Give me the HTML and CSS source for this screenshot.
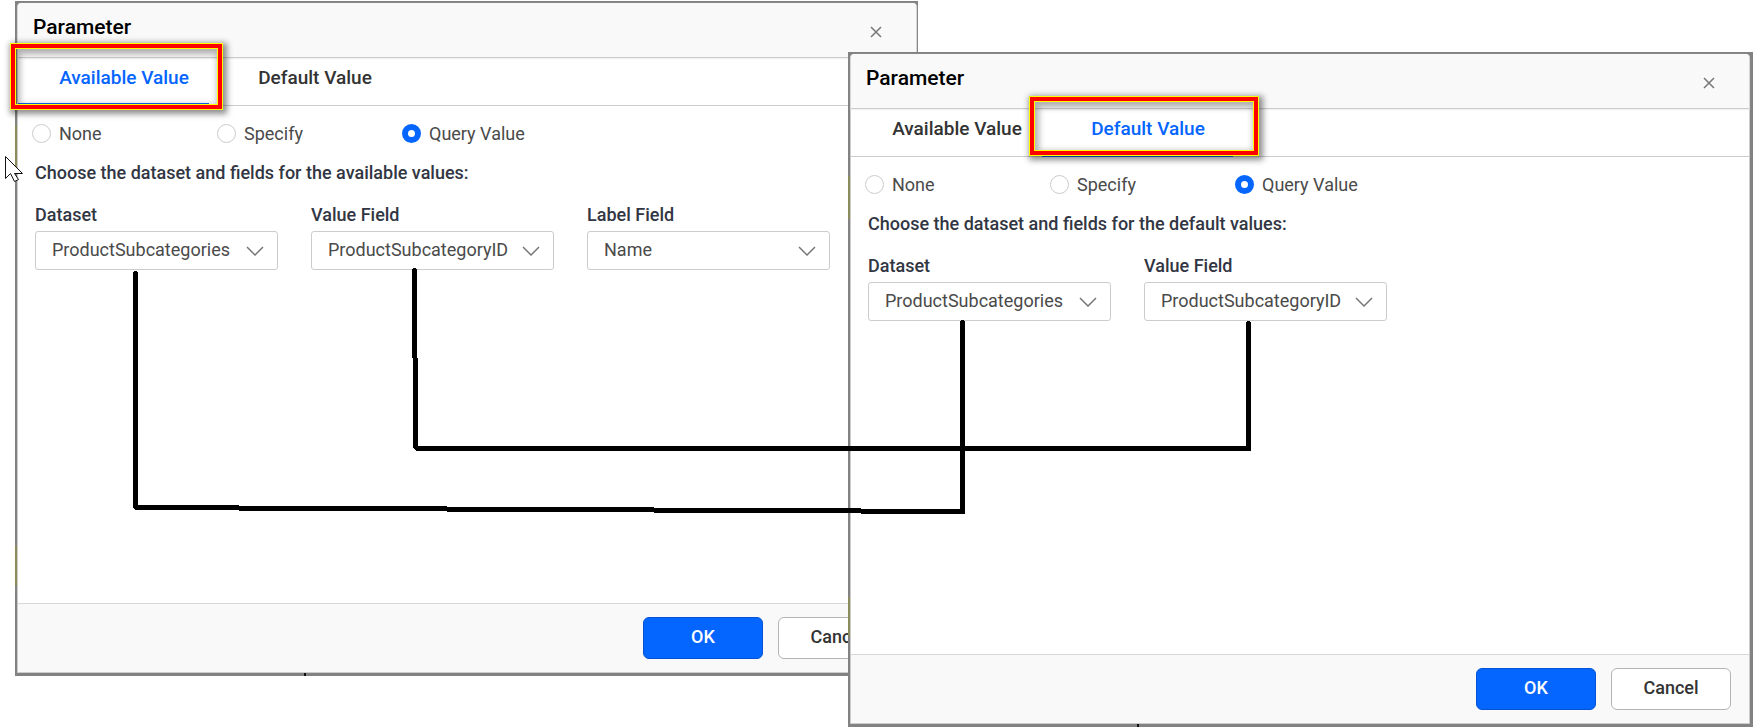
FILE: index.html
```html
<!DOCTYPE html>
<html lang="en">
<head>
<meta charset="utf-8">
<title>Parameter</title>
<link rel="stylesheet" href="styles.css">
</head>
<body>
<main class="stage">
  <section class="dialog dialog-available" role="dialog" aria-labelledby="title-a">
    <div class="panel">
      <header class="head">
        <h2 class="title" id="title-a">Parameter</h2>
        <button class="close" type="button" aria-label="Close"><svg width="12" height="12" viewBox="0 0 12 12"><path d="M1 1l10 10M11 1L1 11"/></svg></button>
      </header>
      <nav class="tabs" role="tablist">
        <button class="tab active" type="button" role="tab" aria-selected="true">Available Value</button>
        <button class="tab" type="button" role="tab" aria-selected="false">Default Value</button>
      </nav>
      <div class="body">
        <div class="modes">
          <label class="mode"><input type="radio" name="mode-a"><span>None</span></label>
          <label class="mode"><input type="radio" name="mode-a"><span>Specify</span></label>
          <label class="mode"><input type="radio" name="mode-a" checked><span>Query Value</span></label>
        </div>
        <p class="hint">Choose the dataset and fields for the available values:</p>
        <div class="fields">
          <div class="field">
            <label for="dataset-a">Dataset</label>
            <div class="pick"><select id="dataset-a"><option>ProductSubcategories</option></select><svg width="18" height="10" viewBox="0 0 18 10"><path d="M1 1l8 8 8-8"/></svg></div>
          </div>
          <div class="field">
            <label for="value-a">Value Field</label>
            <div class="pick"><select id="value-a"><option>ProductSubcategoryID</option></select><svg width="18" height="10" viewBox="0 0 18 10"><path d="M1 1l8 8 8-8"/></svg></div>
          </div>
          <div class="field">
            <label for="label-a">Label Field</label>
            <div class="pick"><select id="label-a"><option>Name</option></select><svg width="18" height="10" viewBox="0 0 18 10"><path d="M1 1l8 8 8-8"/></svg></div>
          </div>
        </div>
      </div>
      <footer class="foot">
        <button class="btn primary" type="button">OK</button>
        <button class="btn" type="button">Cancel</button>
      </footer>
    </div>
  </section>

  <section class="dialog dialog-default" role="dialog" aria-labelledby="title-b">
    <div class="panel">
      <header class="head">
        <h2 class="title" id="title-b">Parameter</h2>
        <button class="close" type="button" aria-label="Close"><svg width="12" height="12" viewBox="0 0 12 12"><path d="M1 1l10 10M11 1L1 11"/></svg></button>
      </header>
      <nav class="tabs" role="tablist">
        <button class="tab" type="button" role="tab" aria-selected="false">Available Value</button>
        <button class="tab active" type="button" role="tab" aria-selected="true">Default Value</button>
      </nav>
      <div class="body">
        <div class="modes">
          <label class="mode"><input type="radio" name="mode-b"><span>None</span></label>
          <label class="mode"><input type="radio" name="mode-b"><span>Specify</span></label>
          <label class="mode"><input type="radio" name="mode-b" checked><span>Query Value</span></label>
        </div>
        <p class="hint">Choose the dataset and fields for the default values:</p>
        <div class="fields">
          <div class="field">
            <label for="dataset-b">Dataset</label>
            <div class="pick"><select id="dataset-b"><option>ProductSubcategories</option></select><svg width="18" height="10" viewBox="0 0 18 10"><path d="M1 1l8 8 8-8"/></svg></div>
          </div>
          <div class="field">
            <label for="value-b">Value Field</label>
            <div class="pick"><select id="value-b"><option>ProductSubcategoryID</option></select><svg width="18" height="10" viewBox="0 0 18 10"><path d="M1 1l8 8 8-8"/></svg></div>
          </div>
        </div>
      </div>
      <footer class="foot">
        <button class="btn primary" type="button">OK</button>
        <button class="btn" type="button">Cancel</button>
      </footer>
    </div>
  </section>

  <div class="marker marker-available"></div>
  <div class="marker marker-default"></div>

  <svg class="connectors" width="1260" height="520" viewBox="0 0 1260 520" shape-rendering="crispEdges" aria-hidden="true">
    <path d="M134 271h3v1h1v233h101v1h208v1h207v1h207v1h99V321h1v-1h3v1h1v193H861v-1H654v-1H447v-1H239v-1H136l-3-2V272h1z"/>
    <path d="M413 268h3v1h1v89h1v88h828V322h1v-1h3v1h1v129H416l-3-4v-89h-1v-89h1z"/>
  </svg>

  <svg class="cursor" width="20" height="28" viewBox="0 0 20 28" aria-hidden="true">
    <path d="M1.500 1.500v22l5-5 4 8 4-2-4-6h8z"/>
  </svg>
</main>
</body>
</html>
```
FILE: styles.css
```css
* { box-sizing: border-box; }

body {
  margin: 0;
  background: #fff;
  color: #4a4a4a;
  font: 18px/24px Roboto, sans-serif;
}

button, select { font: inherit; color: inherit; }

.stage {
  position: relative;
  min-height: 100vh;
  overflow: hidden;
}

.dialog {
  position: absolute;
  display: flex;
  padding: 2px 1px 3px 2px;
  background:
    linear-gradient(#111, #111) 289px 100% / 2px 3px no-repeat,
    linear-gradient(#8b8b5c, #8b8b5c) 0 124px / 2px 43px no-repeat,
    linear-gradient(#8b8b5c, #8b8b5c) 0 545px / 2px 40px no-repeat,
    #828282;
}

.dialog-available { left: 15px; right: 837px; top: 1px; bottom: 51px; }
.dialog-default { left: 848px; right: 2px; top: 52px; bottom: 0; padding-right: 3px; }

.panel {
  flex: 1;
  display: flex;
  flex-direction: column;
  border: 1px solid #ccc;
  border-top: 0;
  border-radius: 4px 4px 0 0;
  background: #fff;
}

.head {
  display: flex;
  justify-content: space-between;
  align-items: center;
  height: 55px;
  padding: 0 34px 0 15px;
  border-bottom: 1px solid #ccc;
  border-radius: 4px 4px 0 0;
  background: #f9f9f9;
  box-shadow: 0 1px 2px #eee;
}

.title {
  margin: 0;
  padding-bottom: 6px;
  color: #000;
  font-size: 21px;
  font-weight: 500;
}

.close {
  display: flex;
  padding: 4px 0 0;
  border: 0;
  background: none;
}

.close path, .pick path { fill: none; stroke: #777; stroke-width: 1.5; }

.tabs {
  display: flex;
  height: 48px;
  border-bottom: 1px solid #ccc;
}

.tab {
  width: 191px;
  padding: 0 0 8px 21px;
  border: 0;
  background: none;
  color: #333;
  font-size: 19px;
  font-weight: 500;
  white-space: nowrap;
}

.tab.active {
  color: #0565ff;
  box-shadow: inset 0 -2px #0565ff, 0 1px #0565ff;
}

.body { flex: 1; padding: 14px 17px; }

.modes { display: flex; margin-left: -3px; }

.mode {
  display: flex;
  align-items: center;
  gap: 8px;
  width: 185px;
  height: 28px;
}

.mode input {
  appearance: none;
  width: 19px;
  height: 19px;
  margin: 0 0 2px;
  border: 1px solid #ccc;
  border-radius: 50%;
  background: #fff;
}

.mode input:checked { border: 6px solid #0565ff; }

.hint {
  margin: 13px 0 18px;
  color: #323643;
  font-weight: 500;
}

.fields { display: flex; gap: 33px; }

.field { width: 243px; }

.field label {
  display: block;
  margin-bottom: 4px;
  color: #323643;
  font-weight: 500;
}

.pick { position: relative; }

.pick select {
  appearance: none;
  display: block;
  width: 100%;
  height: 39px;
  padding: 0 32px 2px 16px;
  border: 1px solid #ccc;
  border-radius: 3px;
  background: #fff;
  color: #4a4a4a;
}

.pick svg {
  position: absolute;
  right: 14px;
  top: 15px;
  pointer-events: none;
}

.foot {
  display: flex;
  justify-content: flex-end;
  gap: 15px;
  padding: 13px 18px;
  border-top: 1px solid #d8d8d8;
  background: #f9f9f9;
}

.btn {
  width: 120px;
  height: 42px;
  padding: 0 0 3px;
  border: 1px solid #b4b4b4;
  border-radius: 6px;
  background: #fff;
  color: #333;
  font-weight: 500;
}

.btn.primary {
  border-color: #0553d2;
  background: #0565ff;
  color: #fff;
}

/* Annotations */
.marker {
  position: absolute;
  border: 1px solid #ff0;
  box-shadow: 2px 2px 6px 2px rgba(0, 0, 0, .45);
}

.marker::before {
  content: "";
  position: absolute;
  inset: 0;
  border: 4px solid #f00;
}

.marker::after {
  content: "";
  position: absolute;
  inset: 4px;
  border: 1px solid #ff0;
  box-shadow: inset 2px 3px 6px 2px rgba(0, 0, 0, .3);
}

.marker-available { left: 10px; top: 43px; width: 213px; height: 67px; }
.marker-default { left: 1029px; top: 96px; width: 230px; height: 60px; }

.connectors { position: absolute; left: 0; top: 0; pointer-events: none; }

.cursor { position: absolute; left: 4px; top: 155px; }
.cursor path { fill: #fff; stroke: #111; stroke-width: 1; }
```
